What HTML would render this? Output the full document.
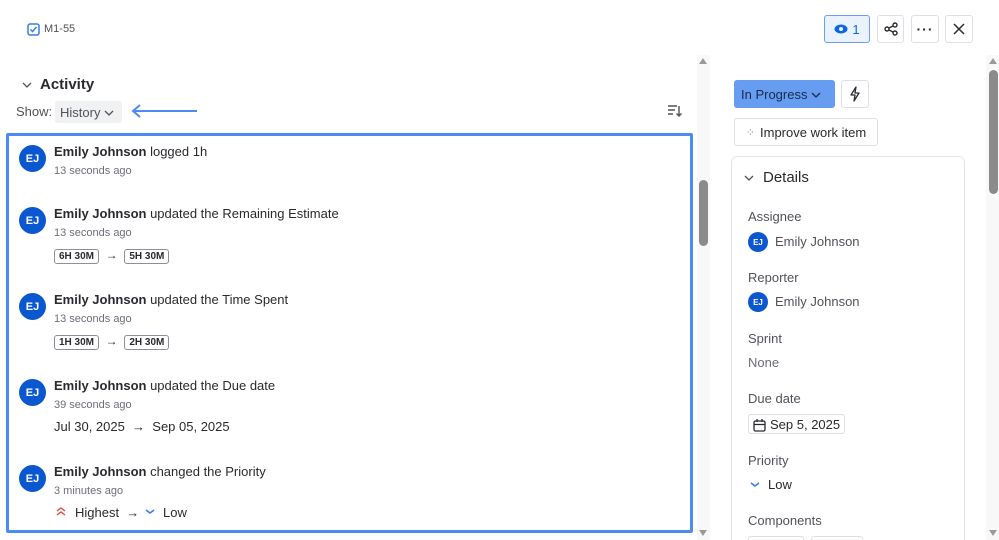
<!DOCTYPE html>
<html style="width:999px;height:540px;overflow:hidden"><head><style>
*{margin:0;padding:0;box-sizing:border-box}
body{width:999px;height:540px;overflow:hidden;background:#fff;font-family:"Liberation Sans",sans-serif;color:#292a2e;position:relative}
.a{position:absolute}
.av{position:absolute;width:27px;height:27px;border-radius:50%;background:#0b57d0;color:#fff;font-size:11px;font-weight:bold;display:flex;align-items:center;justify-content:center}
.sav{width:20px;height:20px;font-size:8px}
.t{font-size:13px;color:#292a2e;white-space:nowrap}
.t b{font-weight:bold}
.s{font-size:11px;color:#6b6e76}
.tag{display:inline-block;border:1px solid #8c8f97;border-radius:3px;font-size:10px;font-weight:bold;padding:1px 4px;color:#292a2e}
.btn{position:absolute;border:1px solid #dcdfe4;border-radius:3px;background:#fff;display:flex;align-items:center;justify-content:center}
.lbl{font-size:13px;color:#505258}
.val{font-size:13px;color:#505258}
</style></head><body>
<svg class="a" style="left:27px;top:23px" width="13" height="13"><rect x="1" y="1" width="11" height="11" rx="2" fill="none" stroke="#357de8" stroke-width="1.5"/><path d="M3.5 6.5l2 2 4-4.5" fill="none" stroke="#357de8" stroke-width="1.5"/></svg>
<div class="a" style="left:44px;top:23px;font-size:11px;color:#505258">M1-55</div>

<div class="btn" style="left:824px;top:15px;width:46px;height:28px;background:#e9f2fe;border-color:#6b9ef0;color:#0c66e4;font-size:13px"><svg width="14" height="10" style="margin-right:4px"><ellipse cx="7" cy="5" rx="6.5" ry="4.5" fill="#0c66e4"/><circle cx="7" cy="5" r="2" fill="#e9f2fe"/></svg>1</div>
<div class="btn" style="left:877px;top:15px;width:27px;height:28px"><svg width="14" height="14"><circle cx="3" cy="7" r="2" fill="none" stroke="#292a2e" stroke-width="1.4"/><circle cx="11" cy="3" r="2" fill="none" stroke="#292a2e" stroke-width="1.4"/><circle cx="11" cy="11" r="2" fill="none" stroke="#292a2e" stroke-width="1.4"/><path d="M5 6l4-2M5 8l4 2" stroke="#292a2e" stroke-width="1.4"/></svg></div>
<div class="btn" style="left:911px;top:15px;width:28px;height:28px;font-weight:bold;font-size:14px;letter-spacing:1px">···</div>
<div class="btn" style="left:945px;top:15px;width:28px;height:28px"><svg width="12" height="12"><path d="M1 1l10 10M11 1L1 11" stroke="#292a2e" stroke-width="1.5"/></svg></div>

<svg class="a" style="left:22px;top:81px" width="10" height="8"><path d="M1 2l4 4 4-4" fill="none" stroke="#505258" stroke-width="1.3"/></svg>
<div class="a" style="left:40px;top:76px;font-size:15px;font-weight:bold">Activity</div>
<div class="a" style="left:16px;top:104px;font-size:13px;color:#505258">Show:</div>
<div class="a" style="left:55px;top:101px;width:67px;height:22px;background:#f0f1f2;border-radius:3px;font-size:13px;color:#505258;padding:4px 0 0 5px">History <svg width="10" height="8"><path d="M1 2l4 4 4-4" fill="none" stroke="#505258" stroke-width="1.3"/></svg></div>
<svg class="a" style="left:131px;top:104px" width="68" height="14"><path d="M2 7h64M9 1L2 7l7 6" fill="none" stroke="#4c8bf5" stroke-width="2"/></svg>
<svg class="a" style="left:667px;top:104px" width="16" height="14"><path d="M1 2h9M1 6h7M1 10h5M12 2v10M9.5 9.5L12 12l2.5-2.5" fill="none" stroke="#505258" stroke-width="1.4"/></svg>

<div class="a" style="left:6px;top:133px;width:687px;height:400px;border:3px solid #4c8bf5;border-radius:2px"></div>

<div class="av" style="left:19px;top:145px">EJ</div>
<div class="a t" style="left:54px;top:144px"><b>Emily Johnson</b> logged 1h</div>
<div class="a s" style="left:54px;top:165px">13 seconds ago</div>

<div class="av" style="left:19px;top:207px">EJ</div>
<div class="a t" style="left:54px;top:206px"><b>Emily Johnson</b> updated the Remaining Estimate</div>
<div class="a s" style="left:54px;top:227px">13 seconds ago</div>
<div class="a" style="left:54px;top:248px;font-size:12px"><span class="tag">6H 30M</span> &nbsp;→&nbsp; <span class="tag">5H 30M</span></div>

<div class="av" style="left:19px;top:293px">EJ</div>
<div class="a t" style="left:54px;top:292px"><b>Emily Johnson</b> updated the Time Spent</div>
<div class="a s" style="left:54px;top:313px">13 seconds ago</div>
<div class="a" style="left:54px;top:334px;font-size:12px"><span class="tag">1H 30M</span> &nbsp;→&nbsp; <span class="tag">2H 30M</span></div>

<div class="av" style="left:19px;top:379px">EJ</div>
<div class="a t" style="left:54px;top:378px"><b>Emily Johnson</b> updated the Due date</div>
<div class="a s" style="left:54px;top:399px">39 seconds ago</div>
<div class="a t" style="left:54px;top:419px">Jul 30, 2025 &nbsp;→&nbsp; Sep 05, 2025</div>

<div class="av" style="left:19px;top:465px">EJ</div>
<div class="a t" style="left:54px;top:464px"><b>Emily Johnson</b> changed the Priority</div>
<div class="a s" style="left:54px;top:485px">3 minutes ago</div>
<svg class="a" style="left:55px;top:506px" width="12" height="10"><path d="M2 5l4-3 4 3M2 9l4-3 4 3" fill="none" stroke="#e2483d" stroke-width="1.4"/></svg>
<div class="a t" style="left:75px;top:505px">Highest &nbsp;→</div>
<svg class="a" style="left:144px;top:508px" width="12" height="8"><path d="M2 2l4 3 4-3" fill="none" stroke="#357de8" stroke-width="1.5"/></svg>
<div class="a t" style="left:163px;top:505px">Low</div>

<div class="a" style="left:697px;top:55px;width:13px;height:485px;background:#f8f8f8"></div>
<svg class="a" style="left:698px;top:57px" width="10" height="8"><path d="M1 7l4-6 4 6z" fill="#9a9a9a"/></svg>
<svg class="a" style="left:698px;top:529px" width="10" height="8"><path d="M1 1l4 6 4-6z" fill="#9a9a9a"/></svg>
<div class="a" style="left:699px;top:180px;width:9px;height:66px;background:#8b8b8b;border-radius:5px"></div>

<div class="a" style="left:986px;top:55px;width:13px;height:485px;background:#f8f8f8"></div>
<svg class="a" style="left:988px;top:57px" width="10" height="8"><path d="M1 7l4-6 4 6z" fill="#9a9a9a"/></svg>
<svg class="a" style="left:988px;top:529px" width="10" height="8"><path d="M1 1l4 6 4-6z" fill="#9a9a9a"/></svg>
<div class="a" style="left:989px;top:70px;width:9px;height:124px;background:#8b8b8b;border-radius:5px"></div>

<div class="a" style="left:734px;top:80px;width:101px;height:28px;background:#669df1;border-radius:3px;font-size:13px;color:#172b4d;padding:7px 0 0 7px">In Progress <svg width="10" height="8"><path d="M1 2l4 4 4-4" fill="none" stroke="#172b4d" stroke-width="1.3"/></svg></div>
<div class="btn" style="left:841px;top:80px;width:28px;height:28px"><svg width="12" height="16"><path d="M7 1L2 9h4l-1 6 5-8H6z" fill="none" stroke="#292a2e" stroke-width="1.3" stroke-linejoin="round"/></svg></div>
<div class="btn" style="left:734px;top:118px;width:144px;height:28px;font-size:13px;color:#292a2e"><span style="color:#8c8f97;margin-right:5px;font-size:11px">⁘</span>Improve work item</div>

<div class="a" style="left:731px;top:156px;width:234px;height:400px;border:1px solid #e4e5e7;border-radius:6px"></div>
<svg class="a" style="left:744px;top:174px" width="10" height="8"><path d="M1 2l4 4 4-4" fill="none" stroke="#505258" stroke-width="1.3"/></svg>
<div class="a" style="left:763px;top:169px;font-size:15px">Details</div>

<div class="a lbl" style="left:748px;top:209px">Assignee</div>
<div class="av sav" style="left:748px;top:232px">EJ</div>
<div class="a val" style="left:775px;top:234px">Emily Johnson</div>
<div class="a lbl" style="left:748px;top:270px">Reporter</div>
<div class="av sav" style="left:748px;top:292px">EJ</div>
<div class="a val" style="left:775px;top:294px">Emily Johnson</div>
<div class="a lbl" style="left:748px;top:331px">Sprint</div>
<div class="a val" style="left:748px;top:355px;color:#6b6e76">None</div>
<div class="a lbl" style="left:748px;top:391px">Due date</div>
<div class="a" style="left:748px;top:414px;width:97px;height:20px;border:1px solid #dcdfe4;border-radius:3px;font-size:13px;padding:2px 0 0 4px;display:flex;align-items:center;gap:4px"><svg width="13" height="13"><rect x="1" y="2" width="11" height="10" rx="1.5" fill="none" stroke="#292a2e" stroke-width="1.3"/><path d="M1 5.5h11M4 0v3M9 0v3" stroke="#292a2e" stroke-width="1.3"/></svg><span style="margin-top:-2px">Sep 5, 2025</span></div>
<div class="a lbl" style="left:748px;top:453px">Priority</div>
<svg class="a" style="left:749px;top:481px" width="12" height="8"><path d="M2 2l4 3 4-3" fill="none" stroke="#357de8" stroke-width="1.5"/></svg>
<div class="a val" style="left:768px;top:477px;color:#292a2e">Low</div>
<div class="a lbl" style="left:748px;top:513px">Components</div>
<div class="a" style="left:748px;top:536px;width:56px;height:20px;border:1px solid #dcdfe4;border-radius:3px"></div>
<div class="a" style="left:811px;top:536px;width:52px;height:20px;border:1px solid #dcdfe4;border-radius:3px"></div>
</body></html>
